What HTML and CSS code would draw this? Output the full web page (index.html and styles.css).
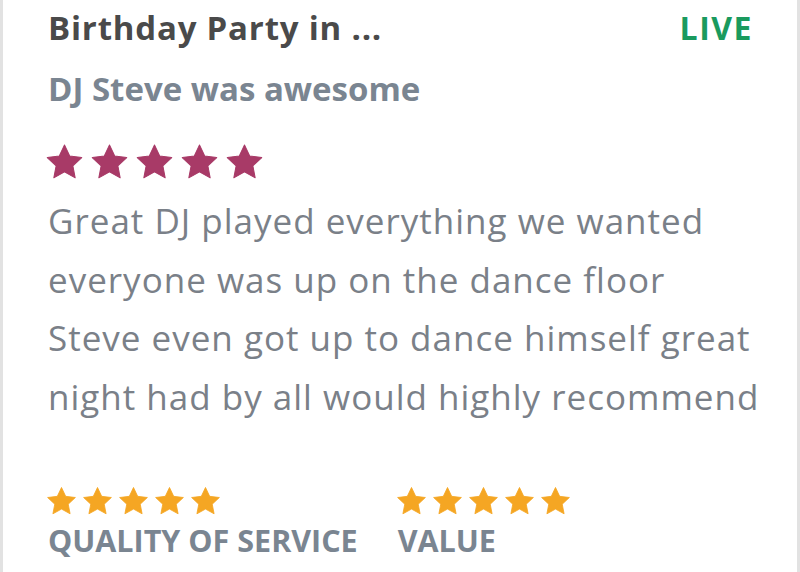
FILE: index.html
```html
<!DOCTYPE html>
<html>
<head>
<meta charset="utf-8">
<link rel="stylesheet" href="styles.css">
</head>
<body>
<svg width="0" height="0" class="defs">
  <defs>
    <path id="star" d="M12 1.8l3.05 6.45 7.05.85-5.2 4.85 1.35 7L12 17.5l-6.25 3.45 1.35-7L1.9 9.1l7.05-.85z"/>
  </defs>
</svg>
<div class="card">
  <div class="head">
    <div class="title">Birthday Party in ...</div>
    <div class="status">LIVE</div>
  </div>
  <div class="subtitle">DJ Steve was awesome</div>
  <div class="stars main">
    <svg viewBox="0 0 24 24"><use href="#star"/></svg>
    <svg viewBox="0 0 24 24"><use href="#star"/></svg>
    <svg viewBox="0 0 24 24"><use href="#star"/></svg>
    <svg viewBox="0 0 24 24"><use href="#star"/></svg>
    <svg viewBox="0 0 24 24"><use href="#star"/></svg>
  </div>
  <p class="body">Great DJ played everything we wanted everyone was up on the dance floor Steve even got up to dance himself great night had by all would highly recommend</p>
  <div class="ratings">
    <div class="rating">
      <div class="stars small">
        <svg viewBox="0 0 24 24"><use href="#star"/></svg>
        <svg viewBox="0 0 24 24"><use href="#star"/></svg>
        <svg viewBox="0 0 24 24"><use href="#star"/></svg>
        <svg viewBox="0 0 24 24"><use href="#star"/></svg>
        <svg viewBox="0 0 24 24"><use href="#star"/></svg>
      </div>
      <div class="label">QUALITY OF SERVICE</div>
    </div>
    <div class="rating">
      <div class="stars small">
        <svg viewBox="0 0 24 24"><use href="#star"/></svg>
        <svg viewBox="0 0 24 24"><use href="#star"/></svg>
        <svg viewBox="0 0 24 24"><use href="#star"/></svg>
        <svg viewBox="0 0 24 24"><use href="#star"/></svg>
        <svg viewBox="0 0 24 24"><use href="#star"/></svg>
      </div>
      <div class="label">VALUE</div>
    </div>
  </div>
</div>
</body>
</html>
```

FILE: styles.css
```css
html, body {
  margin: 0;
  padding: 0;
  background: #ffffff;
}
.defs {
  position: absolute;
  width: 0;
  height: 0;
}
.card {
  box-sizing: border-box;
  width: 800px;
  height: 572px;
  border-left: 3px solid #e2e2e2;
  border-right: 3px solid #e2e2e2;
  padding: 6px 45px 0 45px;
  font-family: "Open Sans", sans-serif;
}
.head {
  display: flex;
  justify-content: space-between;
  align-items: baseline;
}
.title {
  font-size: 33px;
  font-weight: 700;
  color: #4a4a4a;
  line-height: 44px;
  letter-spacing: 0.8px;
}
.status {
  font-size: 32px;
  font-weight: 700;
  color: #1a9a5e;
  letter-spacing: 1.5px;
  margin-right: -1px;
}
.subtitle {
  margin-top: 19px;
  font-size: 33px;
  font-weight: 700;
  color: #7a8591;
  line-height: 40px;
}
.stars {
  display: flex;
}
.stars svg {
  display: block;
}
.stars.main {
  margin: 33px 0 0 -4px;
  gap: 4px;
}
.stars.main svg {
  width: 41px;
  height: 41px;
  fill: #a83a67;
  stroke: #a83a67;
  stroke-width: 0.6;
  stroke-linejoin: round;
}
.body {
  margin: 9px -8px 0 0;
  font-size: 35px;
  line-height: 58.5px;
  letter-spacing: 1px;
  color: #7a8088;
}
.ratings {
  margin-top: 59px;
  display: flex;
  gap: 40px;
}
.stars.small {
  margin-left: -3px;
  gap: 3px;
}
.stars.small svg {
  width: 33px;
  height: 33px;
  fill: #f5a623;
  stroke: #f5a623;
  stroke-width: 0.6;
  stroke-linejoin: round;
}
.label {
  margin-top: 6px;
  font-size: 30.5px;
  font-weight: 700;
  color: #7a8591;
  line-height: 32px;
}
```
